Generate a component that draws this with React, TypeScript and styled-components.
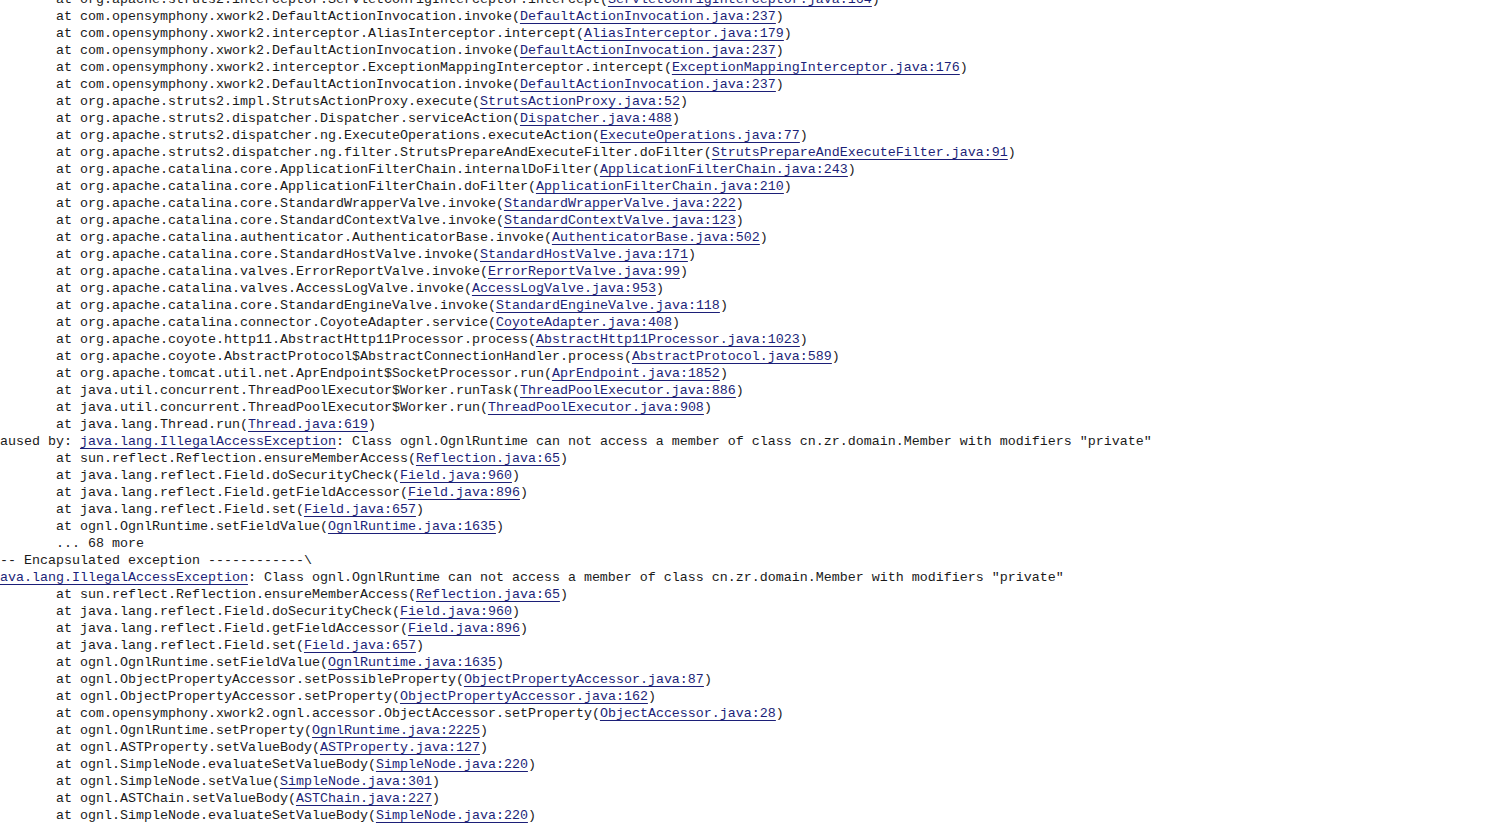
import React from 'react';
import styled, { createGlobalStyle } from 'styled-components';

const GlobalStyle = createGlobalStyle`
  html,
  body {
    margin: 0;
    padding: 0;
    background: #fff;
  }
`;

type Frame = [string, string];

type TraceLine =
  | { kind: 'frame'; frame: Frame }
  | { kind: 'caused'; prefix: string; exception: string; message: string }
  | { kind: 'plain'; text: string; indent?: boolean };

const MESSAGE =
  ': Class ognl.OgnlRuntime can not access a member of class cn.zr.domain.Member with modifiers "private"';

const frames = (list: Frame[]): TraceLine[] =>
  list.map(frame => ({ kind: 'frame', frame }));

const lines: TraceLine[] = [
  ...frames([
    ['org.apache.struts2.interceptor.ServletConfigInterceptor.intercept', 'ServletConfigInterceptor.java:164'],
    ['com.opensymphony.xwork2.DefaultActionInvocation.invoke', 'DefaultActionInvocation.java:237'],
    ['com.opensymphony.xwork2.interceptor.AliasInterceptor.intercept', 'AliasInterceptor.java:179'],
    ['com.opensymphony.xwork2.DefaultActionInvocation.invoke', 'DefaultActionInvocation.java:237'],
    ['com.opensymphony.xwork2.interceptor.ExceptionMappingInterceptor.intercept', 'ExceptionMappingInterceptor.java:176'],
    ['com.opensymphony.xwork2.DefaultActionInvocation.invoke', 'DefaultActionInvocation.java:237'],
    ['org.apache.struts2.impl.StrutsActionProxy.execute', 'StrutsActionProxy.java:52'],
    ['org.apache.struts2.dispatcher.Dispatcher.serviceAction', 'Dispatcher.java:488'],
    ['org.apache.struts2.dispatcher.ng.ExecuteOperations.executeAction', 'ExecuteOperations.java:77'],
    ['org.apache.struts2.dispatcher.ng.filter.StrutsPrepareAndExecuteFilter.doFilter', 'StrutsPrepareAndExecuteFilter.java:91'],
    ['org.apache.catalina.core.ApplicationFilterChain.internalDoFilter', 'ApplicationFilterChain.java:243'],
    ['org.apache.catalina.core.ApplicationFilterChain.doFilter', 'ApplicationFilterChain.java:210'],
    ['org.apache.catalina.core.StandardWrapperValve.invoke', 'StandardWrapperValve.java:222'],
    ['org.apache.catalina.core.StandardContextValve.invoke', 'StandardContextValve.java:123'],
    ['org.apache.catalina.authenticator.AuthenticatorBase.invoke', 'AuthenticatorBase.java:502'],
    ['org.apache.catalina.core.StandardHostValve.invoke', 'StandardHostValve.java:171'],
    ['org.apache.catalina.valves.ErrorReportValve.invoke', 'ErrorReportValve.java:99'],
    ['org.apache.catalina.valves.AccessLogValve.invoke', 'AccessLogValve.java:953'],
    ['org.apache.catalina.core.StandardEngineValve.invoke', 'StandardEngineValve.java:118'],
    ['org.apache.catalina.connector.CoyoteAdapter.service', 'CoyoteAdapter.java:408'],
    ['org.apache.coyote.http11.AbstractHttp11Processor.process', 'AbstractHttp11Processor.java:1023'],
    ['org.apache.coyote.AbstractProtocol$AbstractConnectionHandler.process', 'AbstractProtocol.java:589'],
    ['org.apache.tomcat.util.net.AprEndpoint$SocketProcessor.run', 'AprEndpoint.java:1852'],
    ['java.util.concurrent.ThreadPoolExecutor$Worker.runTask', 'ThreadPoolExecutor.java:886'],
    ['java.util.concurrent.ThreadPoolExecutor$Worker.run', 'ThreadPoolExecutor.java:908'],
    ['java.lang.Thread.run', 'Thread.java:619'],
  ]),
  {
    kind: 'caused',
    prefix: 'Caused by: ',
    exception: 'java.lang.IllegalAccessException',
    message: MESSAGE,
  },
  ...frames([
    ['sun.reflect.Reflection.ensureMemberAccess', 'Reflection.java:65'],
    ['java.lang.reflect.Field.doSecurityCheck', 'Field.java:960'],
    ['java.lang.reflect.Field.getFieldAccessor', 'Field.java:896'],
    ['java.lang.reflect.Field.set', 'Field.java:657'],
    ['ognl.OgnlRuntime.setFieldValue', 'OgnlRuntime.java:1635'],
  ]),
  { kind: 'plain', text: '... 68 more', indent: true },
  { kind: 'plain', text: '/-- Encapsulated exception ------------\\' },
  {
    kind: 'caused',
    prefix: '',
    exception: 'java.lang.IllegalAccessException',
    message: MESSAGE,
  },
  ...frames([
    ['sun.reflect.Reflection.ensureMemberAccess', 'Reflection.java:65'],
    ['java.lang.reflect.Field.doSecurityCheck', 'Field.java:960'],
    ['java.lang.reflect.Field.getFieldAccessor', 'Field.java:896'],
    ['java.lang.reflect.Field.set', 'Field.java:657'],
    ['ognl.OgnlRuntime.setFieldValue', 'OgnlRuntime.java:1635'],
    ['ognl.ObjectPropertyAccessor.setPossibleProperty', 'ObjectPropertyAccessor.java:87'],
    ['ognl.ObjectPropertyAccessor.setProperty', 'ObjectPropertyAccessor.java:162'],
    ['com.opensymphony.xwork2.ognl.accessor.ObjectAccessor.setProperty', 'ObjectAccessor.java:28'],
    ['ognl.OgnlRuntime.setProperty', 'OgnlRuntime.java:2225'],
    ['ognl.ASTProperty.setValueBody', 'ASTProperty.java:127'],
    ['ognl.SimpleNode.evaluateSetValueBody', 'SimpleNode.java:220'],
    ['ognl.SimpleNode.setValue', 'SimpleNode.java:301'],
    ['ognl.ASTChain.setValueBody', 'ASTChain.java:227'],
    ['ognl.SimpleNode.evaluateSetValueBody', 'SimpleNode.java:220'],
    ['ognl.ASTProperty.setValueBody', 'ASTProperty.java:127'],
  ]),
];

const renderLine = (line: TraceLine) => {
  switch (line.kind) {
    case 'frame':
      return (
        <>
          {'\tat '}
          {line.frame[0]}(<SourceLink href="#">{line.frame[1]}</SourceLink>)
        </>
      );
    case 'caused':
      return (
        <>
          {line.prefix}
          <SourceLink href="#">{line.exception}</SourceLink>
          {line.message}
        </>
      );
    default:
      return (
        <>
          {line.indent ? '\t' : ''}
          {line.text}
        </>
      );
  }
};

export default function App() {
  return (
    <Viewport>
      <GlobalStyle />
      <Trace>
        {lines.map((line, i) => (
          <Row key={i}>{renderLine(line)}</Row>
        ))}
      </Trace>
    </Viewport>
  );
}

const Viewport = styled.div`
  width: 1499px;
  height: 824px;
  overflow: hidden;
  background: #fff;
`;

// scrolled view: first char column and top of the first row are cut off
const Trace = styled.pre`
  margin: -9px 0 0 -8px;
  font-family: 'Liberation Mono', 'Courier New', monospace;
  font-size: 13.333px;
  line-height: 17px;
  color: #1a1a1a;
  tab-size: 8;
  -moz-tab-size: 8;
`;

const Row = styled.div`
  height: 17px;
  white-space: pre;
`;

const SourceLink = styled.a`
  color: #1c1f78;
  text-decoration: underline;
  text-underline-offset: 3px;
`;
